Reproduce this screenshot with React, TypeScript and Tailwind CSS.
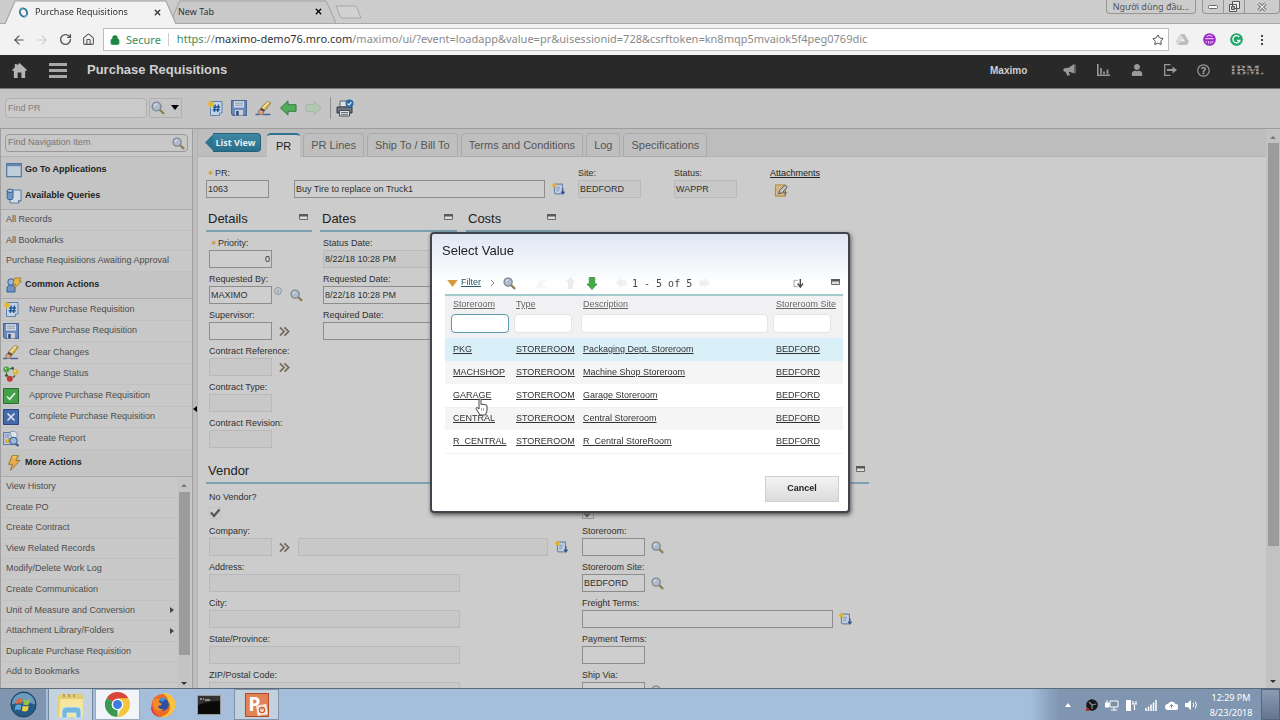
import React, { useState } from 'react';
import { FaUser, FaRegQuestionCircle } from 'react-icons/fa';
import { ArrowLeft, ArrowRight, RotateCw, Home, Star, Lock, X } from 'lucide-react';

/* ---------- icons ---------- */

type IconProps = { className?: string };

const SearchIcon = ({ className = 'size-[14px]' }: IconProps) => (
    <svg viewBox="0 0 16 16" className={className} aria-hidden="true">
        <path d="M10 10l4.200 4" stroke="#8a8150" strokeWidth="2.600" strokeLinecap="round" />
        <circle cx="6.300" cy="6.300" r="5" fill="#b0bccb" stroke="#7d8894" strokeWidth="1.600" />
        <path d="M3.800 6a2.800 2.800 0 0 1 3-2.600" stroke="#e4ebf3" strokeWidth="1.200" fill="none" />
    </svg>
);

const NewIcon = ({ className = 'size-4' }: IconProps) => (
    <svg viewBox="0 0 16 16" className={className} aria-hidden="true">
        <path d="M3.500 1.500h11.500v11.500l-2.500 2.500h-9z" fill="#c4d3e4" stroke="#5f82b0" />
        <path d="M12.500 15.500v-2.500h2.500" fill="#eef3f8" stroke="#5f82b0" />
        <path d="M8.200 4.500l-.8 7.500M11.500 4.500l-.8 7.500M6 7h7M5.700 9.800h7" stroke="#1c5590" strokeWidth="1.400" />
        <path d="M4 0l1 2.500L7.800 2 6.200 4.200 7.500 6.500 4.800 6 3.500 8.200 2.700 5.700 0 5l2-1.700L1.300.8l2 .7z" fill="#e4b62a" />
    </svg>
);

const SaveIcon = ({ className = 'size-4' }: IconProps) => (
    <svg viewBox="0 0 16 16" className={className} aria-hidden="true">
        <path d="M.6.6h14.800v14.800H2.200L.6 13.800z" fill="#6c8abb" stroke="#4f6998" strokeWidth="1.200" />
        <path d="M3 1.200h10v6.300H3z" fill="#d5dbe2" />
        <path d="M4 3.200h8M4 5.200h8" stroke="#8b99ad" />
        <path d="M4 10h8v5.400H4z" fill="#c9d0d9" />
        <path d="M5.200 11h2.500v4.400H5.200z" fill="#2f4775" />
    </svg>
);

const EraserIcon = ({ className = 'size-4' }: IconProps) => (
    <svg viewBox="0 0 16 16" className={className} aria-hidden="true">
        <path d="M0 14.500h4M7 14.500h8" stroke="#4b659b" strokeWidth="1.400" />
        <path d="M5.500 8L12 1.200 15.300 3.200 9.500 10.500z" fill="#d8b35a" stroke="#86702e" strokeWidth=".8" />
        <path d="M7.500 8L13 2" stroke="#faeaa6" strokeWidth="1.300" />
        <path d="M5.500 8l4 2.500-1 1.300-4.300-2.300z" fill="#39424e" />
        <path d="M4.200 9.500l4.300 2.300-2 2.500H4L2.500 12.200z" fill="#d5a586" stroke="#856346" strokeWidth=".8" />
    </svg>
);

const StatusIcon = ({ className = 'size-4' }: IconProps) => (
    <svg viewBox="0 0 16 16" className={className} aria-hidden="true">
        <path d="M6.500 3l3-.8M9 1l1.500 1.200L9.500 4M3.500 7v3M2 9l1.500 1.500L5 9M12 9.500l-2 2" stroke="#2e5c3a" strokeWidth="1.200" fill="none" />
        <circle cx="3.300" cy="3.500" r="3" fill="#4f9d4c" />
        <circle cx="12.700" cy="6" r="3" fill="#d9b544" />
        <circle cx="6.800" cy="12.800" r="3" fill="#c33a35" />
        <circle cx="2.700" cy="2.700" r=".9" fill="#b3dfae" />
        <circle cx="12" cy="5.200" r=".9" fill="#f6e8ae" />
    </svg>
);

const ApproveIcon = ({ className = 'size-4' }: IconProps) => (
    <svg viewBox="0 0 16 16" className={className} aria-hidden="true">
        <path d="M.5.5h15v15H.5z" fill="#43a047" stroke="#2c6b31" />
        <path d="M4 8.500l2.700 2.800L12 5" stroke="#e0efe0" strokeWidth="1.700" fill="none" />
    </svg>
);

const CompleteIcon = ({ className = 'size-4' }: IconProps) => (
    <svg viewBox="0 0 16 16" className={className} aria-hidden="true">
        <path d="M.5.5h15v15H.5z" fill="#4568a8" stroke="#2c4880" />
        <path d="M4.500 4.500l7 7M11.500 4.500l-7 7" stroke="#dde5f2" strokeWidth="1.700" />
    </svg>
);

const ReportIcon = ({ className = 'size-4' }: IconProps) => (
    <svg viewBox="0 0 16 16" className={className} aria-hidden="true">
        <path d="M.6 1.600h12v12H.6z" fill="#bdcbe0" stroke="#59749f" />
        <path d="M2 4h5M2 6h4" stroke="#728db8" />
        <path d="M2.500 12V8.500h2V12zM5 12V7h2v5z" fill="#d2a238" />
        <path d="M7 .5h5l2 2v5H9z" fill="#dce3ec" stroke="#8392ab" strokeWidth=".8" />
        <path d="M12 12l3.500 3" stroke="#3d598c" strokeWidth="2.200" />
        <circle cx="10.500" cy="9.800" r="3.500" fill="#9db9dc" stroke="#4e6c9f" strokeWidth="1.200" />
    </svg>
);

const BoltIcon = ({ className = 'size-4' }: IconProps) => (
    <svg viewBox="0 0 16 16" className={className} aria-hidden="true">
        <path d="M6 .7h6.500L10 5.500h4L4.500 15.300l2-6H2.500z" fill="#e6ae49" stroke="#94702f" strokeWidth=".9" />
        <path d="M6.800 2h3.500" stroke="#f7dc98" />
    </svg>
);

const CommonIcon = ({ className = 'size-4' }: IconProps) => (
    <svg viewBox="0 0 16 16" className={className} aria-hidden="true">
        <path d="M1 15v-4c0-2 2-3 4-3s4 1 4 3v4z" fill="#6e93c7" stroke="#3c5e93" />
        <circle cx="5" cy="5" r="3.200" fill="#9db7da" stroke="#3c5e93" />
        <path d="M8.500 1H15l-2 3h2.500L8 12l1.500-5H7z" fill="#e9bb44" stroke="#8f722b" strokeWidth=".8" />
    </svg>
);

const AppsIcon = ({ className = 'size-4' }: IconProps) => (
    <svg viewBox="0 0 16 16" className={className} aria-hidden="true">
        <path d="M.7 1.700h14.600v13H.7z" fill="#c0ceda" stroke="#53779f" strokeWidth="1.200" />
        <path d="M1 2h14v2.200H1z" fill="#6288b0" />
    </svg>
);

const QueryIcon = ({ className = 'size-4' }: IconProps) => (
    <svg viewBox="0 0 16 16" className={className} aria-hidden="true">
        <path d="M6 2h9v10.500L12.500 15H4v-3" fill="#d2dbe5" stroke="#5c7da4" />
        <path d="M12.500 15v-2.500H15" fill="none" stroke="#5c7da4" />
        <path d="M1.200 3v7.500c0 1.500 5.800 1.500 5.800 0V3" fill="#6f99c5" stroke="#35618f" />
        <ellipse cx="4.100" cy="2.800" rx="2.900" ry="1.700" fill="#a9c4de" stroke="#35618f" />
    </svg>
);

const ArrowIcon = ({ className = '', flip = false, fill = '#55ab5c', stroke = '#2f7a38' }) => (
    <svg viewBox="0 0 18 16" className={className} aria-hidden="true">
        <path
            d={flip ? 'M17.500 8L9.500 .5v4H1v7H9.500v4z' : 'M.5 8l8-7.500v4h8.500v7h-8.500v4z'}
            fill={fill}
            stroke={stroke}
            strokeLinejoin="round"
        />
    </svg>
);

const PrintIcon = ({ className = 'size-[18px]' }: IconProps) => (
    <svg viewBox="0 0 18 18" className={className} aria-hidden="true">
        <path d="M4 2h8v6H4z" fill="#dde1e6" stroke="#596069" />
        <path d="M1 8h15v6H1z" fill="#6c747e" stroke="#343b43" />
        <path d="M3.500 11.500h10V17h-10z" fill="#e2e5e9" stroke="#454c55" />
        <path d="M5 13.500h7M5 15.300h7" stroke="#6b737d" />
        <circle cx="13.500" cy="4.500" r="4" fill="#2b6aa6" />
        <path d="M11.500 4.500l1.500 1.500 2.500-3" stroke="#d0e0ef" strokeWidth="1.200" fill="none" />
    </svg>
);

const ListIcon = ({ className = 'size-[14px]' }: IconProps) => (
    <svg viewBox="0 0 16 16" className={className} aria-hidden="true">
        <path d="M4 2.500h9v8.500M4 4v8q0 1.500 1.500 1.500H12" fill="none" stroke="#6a84b0" strokeWidth="1.400" />
        <path d="M5 4h7v8.500H5z" fill="#c3d0e2" />
        <path d="M6 6h4M6 8h4M6 10h3" stroke="#7b93ba" />
        <path d="M13.500 7v6.500M11.500 11l2 2.700 2-2.700" stroke="#2f4f90" strokeWidth="1.400" fill="none" />
        <path d="M3.500 0l.9 2.200L7 2 5.500 4 6.600 6.200 4.200 5.500 2.500 7.500 2.200 5 0 4l2-1.200z" fill="#dfb32e" />
    </svg>
);

const Chevrons = () => (
    <svg viewBox="0 0 12 12" className="size-[11px]" aria-hidden="true">
        <path d="M1 1.500l4.500 4.500L1 10.500M6 1.500l4.500 4.500L6 10.500" fill="none" stroke="#75695a" strokeWidth="1.900" />
    </svg>
);

const CollapseIcon = () => (
    <svg viewBox="0 0 9 6" className="h-[6px] w-[9px]" aria-hidden="true">
        <path d="M.5.5h8v5h-8z" fill="#dcdcdc" stroke="#6a6a6a" />
        <path d="M0 0h9v2.500H0z" fill="#5a5a5a" />
    </svg>
);

const AttachIcon = () => (
    <svg viewBox="0 0 16 16" className="size-[15px]" aria-hidden="true">
        <path d="M1.500 2h10.500v12H1.500z" fill="#d4b585" stroke="#b3853a" />
        <path d="M5 11.500l1-3.500 5-5c1.500-1 3.500.5 2.500 2.200L8.500 10.500 5 11.500z" fill="#c8c8c8" stroke="#4b4b4b" />
        <path d="M9.500 10.500h4.500M12 8.500v5" stroke="#666" />
    </svg>
);

const Megaphone = () => (
    <svg viewBox="0 0 14 13" className="h-[12px] w-[13px]" aria-hidden="true">
        <path d="M12 0v10L6.500 8.300H6l1.500 3.500-2.800.8-2-4.300H1.500Q.3 7.800.3 6.300T1.500 4.500L6 4z" fill="currentColor" />
        <path d="M13 .5v9.500" stroke="currentColor" />
    </svg>
);

/* ---------- data ---------- */

const queries = ['All Records', 'All Bookmarks', 'Purchase Requisitions Awaiting Approval'];

const actions = [
    { label: 'New Purchase Requisition', Icon: NewIcon },
    { label: 'Save Purchase Requisition', Icon: SaveIcon },
    { label: 'Clear Changes', Icon: EraserIcon },
    { label: 'Change Status', Icon: StatusIcon },
    { label: 'Approve Purchase Requisition', Icon: ApproveIcon },
    { label: 'Complete Purchase Requisition', Icon: CompleteIcon },
    { label: 'Create Report', Icon: ReportIcon },
];

const moreActions = [
    { label: 'View History' },
    { label: 'Create PO' },
    { label: 'Create Contract' },
    { label: 'View Related Records' },
    { label: 'Modify/Delete Work Log' },
    { label: 'Create Communication' },
    { label: 'Unit of Measure and Conversion', sub: true },
    { label: 'Attachment Library/Folders', sub: true },
    { label: 'Duplicate Purchase Requisition' },
    { label: 'Add to Bookmarks' },
];

const storerooms = [
    ['PKG', 'STOREROOM', 'Packaging Dept. Storeroom', 'BEDFORD'],
    ['MACHSHOP', 'STOREROOM', 'Machine Shop Storeroom', 'BEDFORD'],
    ['GARAGE', 'STOREROOM', 'Garage Storeroom', 'BEDFORD'],
    ['CENTRAL', 'STOREROOM', 'Central Storeroom', 'BEDFORD'],
    ['R_CENTRAL', 'STOREROOM', 'R_Central StoreRoom', 'BEDFORD'],
];

const tabs = ['PR', 'PR Lines', 'Ship To / Bill To', 'Terms and Conditions', 'Log', 'Specifications'];

/* ---------- browser ---------- */

function TabShape({ fill }: { fill: string }) {
    return (
        <svg viewBox="0 0 170 24" preserveAspectRatio="none" className="absolute inset-0 size-full" aria-hidden="true">
            <path d="M0 24L10 1h150l10 23" fill={fill} stroke="#a0a0a0" />
        </svg>
    );
}

function Browser() {
    return (
        <header className="shrink-0 font-['Noto_Sans','Open_Sans',sans-serif]">
            <div className="flex h-6 items-stretch border-b border-[#a8a8a8] bg-[#cccccc] pl-[5px] text-[9px] text-[#333]">
                <div className="relative z-10 -mb-px flex w-[171px] items-center pr-[14px] pl-[13px]">
                    <TabShape fill="#f2f2f2" />
                    <svg viewBox="0 0 12 12" className="relative mr-[6px] size-[11px]" aria-hidden="true">
                        <ellipse cx="6" cy="6" rx="3.800" ry="4.500" fill="none" stroke="#2c7295" strokeWidth="2" transform="rotate(-25 6 6)" />
                        <path d="M2 2l3-1M7 11l3-2" stroke="#6cb5cf" strokeWidth="1.500" />
                    </svg>
                    <span className="relative flex-1 whitespace-nowrap">Purchase Requisitions</span>
                    <button aria-label="Close Purchase Requisitions" className="relative"><X size={9} strokeWidth={3.5} /></button>
                </div>
                <div className="relative -ml-[6px] flex w-[166px] items-center pr-[13px] pl-[8px]">
                    <TabShape fill="#c9c9c9" />
                    <span className="relative flex-1">New Tab</span>
                    <button aria-label="Close New Tab" className="relative text-black"><X size={9} strokeWidth={3.5} /></button>
                </div>
                <button aria-label="New tab" className="-ml-px self-center">
                    <svg viewBox="0 0 27 14" className="h-[14px] w-[27px]"><path d="M1 1h19q1 0 2 2l4 10H7q-1 0-2-2z" fill="#d2d2d2" stroke="#a6a6a6" /></svg>
                </button>
                <div className="ml-auto flex items-start gap-[6px] text-[#555]">
                    <button className="h-[14px] w-[90px] rounded-b border border-t-0 border-[#959595] px-1 text-[9px] leading-[13px]">Người dùng đầu...</button>
                    <div className="flex h-[14px] w-[78px] rounded-b border border-t-0 border-[#959595]">
                        <button aria-label="Minimize" className="flex w-[21px] items-center justify-center border-r border-[#959595]">
                            <svg viewBox="0 0 10 4" className="h-1 w-[10px]"><rect x=".5" y=".5" width="9" height="3" rx="1" fill="#fff" stroke="#666" /></svg>
                        </button>
                        <button aria-label="Restore" className="flex w-[21px] items-center justify-center border-r border-[#959595]">
                            <svg viewBox="0 0 11 11" className="size-[11px]"><path d="M3.500.5h7v7h-7zM.5 3.500h7v7h-7z" fill="#eee" stroke="#555" /><path d="M2.500 5.500h3v3h-3z" fill="#aaa" stroke="#555" /></svg>
                        </button>
                        <button aria-label="Close window" className="flex flex-1 items-center justify-center">
                            <svg viewBox="0 0 10 10" className="size-[10px]"><path d="M1.500 1.500l7 7M8.500 1.500l-7 7" stroke="#555" strokeWidth="3" /><path d="M1.500 1.500l7 7M8.500 1.500l-7 7" stroke="#eee" strokeWidth="1.400" /></svg>
                        </button>
                    </div>
                </div>
            </div>
            <div className="flex h-[31px] items-center bg-[#f2f2f2] pl-3 text-[#555]">
                <button aria-label="Back"><ArrowLeft size={14} /></button>
                <button aria-label="Forward" className="ml-[9px] text-[#ccc]"><ArrowRight size={14} /></button>
                <button aria-label="Reload" className="ml-[10px]"><RotateCw size={13} strokeWidth={2.5} /></button>
                <button aria-label="Home page" className="ml-[10px]"><Home size={13} /></button>
                <div className="ml-[8px] flex h-[23px] flex-1 items-center border border-[#bcbcbc] bg-white pr-1 pl-[6px] text-[11px] text-[#8a8a8a]">
                    <Lock size={10} strokeWidth={3} className="fill-[#1d8641] text-[#1d8641]" />
                    <span className="ml-[6px] border-r border-[#ccc] pr-[7px] leading-[13px] text-[#3c8d58]">Secure</span>
                    <div role="textbox" aria-label="Address" contentEditable suppressContentEditableWarning className="ml-2 flex-1 whitespace-nowrap outline-none">
                        <span className="text-[#3c8d58]">https</span>://<span className="text-[#333]">maximo-demo76.mro.com</span>/maximo/ui/?event=loadapp&amp;value=pr&amp;uisessionid=728&amp;csrftoken=kn8mqp5mvaiok5f4peg0769dic
                    </div>
                    <button aria-label="Bookmark" className="text-[#444]"><Star size={12} /></button>
                </div>
                <div className="ml-[7px] flex w-[104px] items-center">
                    <svg viewBox="0 0 14 14" className="size-[13px]" aria-hidden="true">
                        <path d="M5 1h4l5 8-2 4H2L0 9z" fill="#bdbdbd" /><path d="M7 5l2.500 4h-5z" fill="#f2f2f2" /><path d="M5 1l2.500 4L2.300 13 0 9z" fill="#dadada" />
                    </svg>
                    <svg viewBox="0 0 14 14" className="ml-[14px] size-[13px]" aria-hidden="true">
                        <circle cx="7" cy="7" r="6.800" fill="#9a2bc8" /><path d="M2.500 6h9M4 4q3-3 6 0M3.500 8.500v2M6 8.500v3M8.500 8.500v3M10.500 8.500v2" stroke="#ebbdf8" strokeWidth="1.200" fill="none" />
                    </svg>
                    <svg viewBox="0 0 14 14" className="ml-[14px] size-[13px]" aria-hidden="true">
                        <circle cx="7" cy="7" r="6.800" fill="#22a56b" /><path d="M10 4.500A3.800 3.800 0 1 0 10.500 8H7.500M10.500 8v2" stroke="#fff" strokeWidth="1.400" fill="none" />
                    </svg>
                    <button aria-label="Browser menu" className="ml-[17px]">
                        <svg viewBox="0 0 4 12" className="h-3 w-1"><path d="M1 1h2v2H1zM1 5h2v2H1zM1 9h2v2H1z" fill="#444" /></svg>
                    </button>
                </div>
            </div>
        </header>
    );
}

/* ---------- application bars ---------- */

function AppHeader() {
    return (
        <div className="flex h-[34px] shrink-0 items-center border-b border-[#777] bg-[#292929] pr-4 pb-[3px] pl-3 text-[#999]">
            <button aria-label="Home" className="text-[#b5b5b5]">
                <svg viewBox="0 0 16 16" className="size-[15px]"><path d="M8 0l8 7.500-1.200 1.300L14 8v8H10v-6H6v6H2V8l-.8.8L0 7.500l3-2.800V1h2.200v1.600z" fill="currentColor" /></svg>
            </button>
            <button aria-label="Menu" className="ml-[22px] flex w-[18px] flex-col gap-[3px]">
                <i className="h-[3px] bg-[#a8a8a8]" />
                <i className="h-[3px] bg-[#a8a8a8]" />
                <i className="h-[3px] bg-[#a8a8a8]" />
            </button>
            <h1 className="ml-[20px] flex-1 text-[13px] font-bold text-[#cfcfcf]">Purchase Requisitions</h1>
            <span className="mr-[36px] text-[10px] font-bold text-[#cfcfcf]">Maximo</span>
            <button aria-label="Bulletins"><Megaphone /></button>
            <button aria-label="Reports" className="ml-[21px]">
                <svg viewBox="0 0 13 12" className="h-3 w-[13px]"><path d="M.7 0v11.300H13M4 10V4M7 10V7.500M10.500 10V5.500" stroke="currentColor" strokeWidth="1.700" fill="none" /></svg>
            </button>
            <button aria-label="Profile" className="ml-[21px]"><FaUser className="text-[12px]" /></button>
            <button aria-label="Sign out" className="ml-[21px]">
                <svg viewBox="0 0 13 12" className="h-3 w-[13px]"><path d="M6.500.7H.7v10.600h5.800" stroke="currentColor" strokeWidth="1.300" fill="none" /><path d="M3 5h5.500V2.500L13 6 8.500 9.500V7H3z" fill="currentColor" /></svg>
            </button>
            <button aria-label="Help" className="ml-[20px]"><FaRegQuestionCircle className="text-[13px]" /></button>
            <span className="relative ml-[20px] font-['Liberation_Serif',serif] text-[15px] leading-[14px] font-bold text-[#999]">
                IBM.
                <i className="absolute inset-0 bg-[repeating-linear-gradient(to_bottom,#29292900_0_2px,#292929b0_2px_3px)]" />
            </span>
        </div>
    );
}

function ToolBar() {
    return (
        <div className="flex h-[40px] shrink-0 items-center border-b border-[#9c9c9c] bg-[#c5c5c5] pb-[2px] pl-[5px] text-[9px]">
            <input aria-label="Find PR" placeholder="Find PR" className="h-5 w-[142px] rounded border border-[#b0b0b0] bg-[#cacaca] px-[2px] placeholder:text-[#808080]" />
            <div className="ml-[2px] flex h-5 w-[33px] items-center justify-between border border-[#b0b0b0] pr-[2px] pl-px">
                <button aria-label="Find"><SearchIcon /></button>
                <button aria-label="Search options"><svg viewBox="0 0 8 5" className="h-[5px] w-2"><path d="M0 0h8L4 5z" /></svg></button>
            </div>
            <div className="ml-[25px] flex items-center gap-2">
                <button aria-label="New"><NewIcon /></button>
                <button aria-label="Save"><SaveIcon /></button>
                <button aria-label="Clear"><EraserIcon className="h-4 w-[17px]" /></button>
                <button aria-label="Previous"><ArrowIcon className="h-4 w-[17px]" /></button>
                <button aria-label="Next"><ArrowIcon className="h-4 w-[17px]" flip fill="#b3c8b3" stroke="#a3b7a3" /></button>
                <i className="h-[22px] w-px bg-[#8f8f8f]" />
                <button aria-label="Print" className="-ml-[3px]"><PrintIcon /></button>
            </div>
        </div>
    );
}

/* ---------- sidebar ---------- */

function NavHeading({ Icon, label }: { Icon: (p: IconProps) => React.JSX.Element; label: string }) {
    return (
        <h2 className="flex h-[26px] shrink-0 items-center gap-[3px] pl-[5px] font-bold text-[#222]">
            <Icon />
            {label}
        </h2>
    );
}

function Sidebar() {
    return (
        <nav className="flex w-[193px] shrink-0 flex-col border-x border-[#a0a0a0] bg-[#c8c8c8] text-[9px] text-[#4d4d4d]">
            <div className="flex h-[28px] shrink-0 items-center border-b border-[#b0b0b0] px-1 pt-px">
                <div className="flex h-[18px] flex-1 items-center rounded border border-[#999] pr-[2px] pl-[2px]">
                    <input aria-label="Find Navigation Item" placeholder="Find Navigation Item" className="min-w-0 flex-1 bg-transparent placeholder:text-[#777]" />
                    <SearchIcon className="size-[13px]" />
                </div>
            </div>
            <div className="shrink-0 border-b border-[#ababab] bg-[#c4c4c4]">
                <NavHeading Icon={AppsIcon} label="Go To Applications" />
                <NavHeading Icon={QueryIcon} label="Available Queries" />
            </div>
            <ul className="flex h-[62px] shrink-0 flex-col">
                {queries.map(q => (
                    <li key={q} className="flex flex-1 items-center border-b border-[#c1c1c1] pl-[5px]"><a href="#">{q}</a></li>
                ))}
            </ul>
            <div className="shrink-0 border-b border-[#ababab] bg-[#c4c4c4]">
                <NavHeading Icon={CommonIcon} label="Common Actions" />
            </div>
            <ul className="flex h-[151px] shrink-0 flex-col">
                {actions.map(({ label, Icon }) => (
                    <li key={label} className="flex flex-1 items-center gap-[10px] border-b border-[#c1c1c1] pl-[2px]">
                        <Icon />
                        <a href="#">{label}</a>
                    </li>
                ))}
            </ul>
            <div className="shrink-0 border-b border-[#ababab] bg-[#c4c4c4]">
                <NavHeading Icon={BoltIcon} label="More Actions" />
            </div>
            <div className="flex min-h-0 flex-1">
                <ul className="flex flex-1 flex-col pb-[5px]">
                    {moreActions.map(m => (
                        <li key={m.label} className="flex flex-1 items-center justify-between border-b border-[#c1c1c1] pr-1 pl-[5px]">
                            <a href="#">{m.label}</a>
                            {m.sub && <svg viewBox="0 0 4 6" className="h-[6px] w-1"><path d="M0 0l4 3-4 3z" fill="#444" /></svg>}
                        </li>
                    ))}
                </ul>
                <div className="mr-[2px] flex w-[12px] flex-col items-center bg-[#c4c4c4] pt-[7px] pb-[3px]">
                    <svg viewBox="0 0 6 3" className="h-[3px] w-[6px]"><path d="M0 3l3-3 3 3z" fill="#777" /></svg>
                    <i className="mt-[5px] h-[163px] w-[11px] bg-[#9b9b9b]" />
                    <svg viewBox="0 0 6 3" className="mt-auto h-[3px] w-[6px]"><path d="M0 0l3 3 3-3z" fill="#333" /></svg>
                </div>
            </div>
        </nav>
    );
}

/* ---------- record form ---------- */

interface FieldProps {
    label: string;
    value?: string;
    width?: string;
    readOnly?: boolean;
    required?: boolean;
    right?: boolean;
    children?: React.ReactNode;
}

function Field({ label, value = '', width = 'w-[63px]', readOnly, required, right, children }: FieldProps) {
    const id = 'f-' + label.toLowerCase().replace(/\W+/g, '-');
    return (
        <div className="flex flex-col">
            <label htmlFor={id} className="flex h-[13px] items-end pb-px leading-[11px] whitespace-nowrap">
                {required && <span aria-hidden="true" className="w-[9px] pl-px text-[#d29a2c]">✶</span>}
                {label}
            </label>
            <div className="flex h-[18px] items-center">
                <input
                    id={id}
                    defaultValue={value}
                    readOnly={readOnly}
                    className={`h-[18px] shrink-0 border px-px ${width} ${readOnly ? 'border-[#b9b9b9] bg-[#c8c8c8]' : 'border-[#8d8d8d] bg-[#cecece]'} ${right ? 'text-right' : ''}`}
                />
                {children}
            </div>
        </div>
    );
}

function Section({ title, className, children }: { title: string; className: string; children?: React.ReactNode }) {
    return (
        <section className={`flex shrink-0 flex-col ${className}`}>
            <div className="flex h-[25px] items-center justify-between border-b-2 border-[#7ba0b0] pr-1 pl-[2px]">
                <h2 className="text-[13px] text-[#222]">{title}</h2>
                <button aria-label={`Collapse ${title}`} className="pb-1"><CollapseIcon /></button>
            </div>
            <div className="flex flex-col gap-[5px] pt-[5px] pl-[3px]">{children}</div>
        </section>
    );
}

function CheckField({ id, label, frame }: { id: string; label: string; frame: string }) {
    return (
        <div className="flex h-[34px] flex-col gap-1 pt-[2px]">
            <label htmlFor={id} className="h-3 leading-3">{label}</label>
            <span className="relative size-3">
                <input id={id} type="checkbox" defaultChecked className={`block size-3 appearance-none border ${frame}`} />
                <svg viewBox="0 0 12 12" className="pointer-events-none absolute inset-0 size-3" aria-hidden="true">
                    <path d="M2 5.500L5 9l5.500-6.500" fill="none" stroke="#555" strokeWidth="2.200" />
                </svg>
            </span>
        </div>
    );
}

function RecordForm() {
    const [tab, setTab] = useState('PR');
    return (
        <main className="flex min-w-0 flex-1 text-[9px] text-[#303030]">
            <div className="flex min-w-0 flex-1 flex-col">
                <div className="flex h-7 shrink-0 items-end border-b border-[#b4b4b4] bg-[#bdbdbd] pl-[7px]">
                    <button className="mr-[6px] mb-[4px] flex h-[19px] items-center text-[#e8eef2]">
                        <svg viewBox="0 0 9 18" className="h-[17px] w-[8px]"><path d="M9 0v18L0 9z" fill="#2c738f" /></svg>
                        <span className="flex h-[19px] w-[48px] items-center justify-center rounded-r-sm border border-l-0 border-[#23627c] bg-linear-to-b from-[#3f87a2] to-[#27708c] pr-[2px] font-['Open_Sans',sans-serif] text-[9px] font-bold whitespace-nowrap">List View</span>
                    </button>
                    <div role="tablist" className="-mb-px flex items-end gap-[3px] text-[11px] text-[#555]">
                        {tabs.map(t => (
                            <button
                                key={t}
                                role="tab"
                                aria-selected={t === tab}
                                onClick={() => setTab(t)}
                                className={`h-6 rounded-t-sm whitespace-nowrap ${t === tab ? 'border-t-2 border-[#2c738f] bg-[#cdcdcd] px-[9px] text-[#222]' : 'border border-[#aaa] bg-[#bfbfbf] px-[7px]'}`}
                            >
                                {t}
                            </button>
                        ))}
                    </div>
                </div>
                <div className="min-h-0 flex-1 overflow-hidden bg-[#cccccc] pt-[10px] pl-[8px]">
                    <div className="flex items-start">
                        <Field label="PR:" value="1063" required />
                        <div className="mt-[13px] ml-[25px] flex items-center gap-[6px]">
                            <input aria-label="PR description" defaultValue="Buy Tire to replace on Truck1" className="h-[18px] w-[251px] border border-[#8d8d8d] bg-[#cecece] px-px" />
                            <ListIcon />
                        </div>
                        <div className="ml-[13px]"><Field label="Site:" value="BEDFORD" readOnly /></div>
                        <div className="ml-[33px]"><Field label="Status:" value="WAPPR" readOnly /></div>
                        <a href="#" className="ml-[33px] flex flex-col gap-[2px] text-[#222] underline">
                            Attachments
                            <span className="pl-1"><AttachIcon /></span>
                        </a>
                    </div>
                    <div className="mt-[9px] flex items-start">
                        <Section title="Details" className="w-[106px]">
                            <Field label="Priority:" value="0" required right />
                            <Field label="Requested By:" value="MAXIMO">
                                <span className="mb-2 ml-[2px] flex size-2 items-center justify-center rounded-full border border-[#8794a4] text-[6px] leading-none text-[#456]">i</span>
                                <SearchIcon className="ml-[8px] size-[13px] shrink-0" />
                            </Field>
                            <Field label="Supervisor:"><span className="ml-[7px]"><Chevrons /></span></Field>
                            <Field label="Contract Reference:" readOnly><span className="ml-[7px]"><Chevrons /></span></Field>
                            <Field label="Contract Type:" readOnly />
                            <Field label="Contract Revision:" readOnly />
                        </Section>
                        <Section title="Dates" className="ml-[8px] w-[137px]">
                            <Field label="Status Date:" value="8/22/18 10:28 PM" width="w-[110px]" readOnly />
                            <Field label="Requested Date:" value="8/22/18 10:28 PM" width="w-[110px]" />
                            <Field label="Required Date:" width="w-[110px]" />
                        </Section>
                        <Section title="Costs" className="ml-[9px] w-[94px]" />
                    </div>
                    <div className="mt-[11px] flex items-start">
                        <Section title="Vendor" className="w-[364px]">
                            <CheckField id="no-vendor" label="No Vendor?" frame="border-[#c2c2c2]" />
                            <div className="-mt-[3px]">
                                <Field label="Company:" readOnly>
                                    <span className="ml-[7px]"><Chevrons /></span>
                                    <input aria-label="Company name" readOnly className="ml-2 h-[18px] w-[250px] shrink-0 border border-[#b9b9b9] bg-[#c8c8c8]" />
                                    <ListIcon className="ml-[6px] size-[14px] shrink-0" />
                                </Field>
                            </div>
                            <Field label="Address:" width="w-[251px]" readOnly />
                            <Field label="City:" width="w-[251px]" readOnly />
                            <Field label="State/Province:" width="w-[251px]" readOnly />
                            <Field label="ZIP/Postal Code:" width="w-[251px]" readOnly />
                        </Section>
                        <Section title="Shipping" className="ml-[9px] w-[290px]">
                            <CheckField id="inspection" label="Inspection?" frame="border-[#999]" />
                            <div className="-mt-[3px]">
                                <Field label="Storeroom:"><SearchIcon className="ml-[6px] size-[13px]" /></Field>
                            </div>
                            <Field label="Storeroom Site:" value="BEDFORD"><SearchIcon className="ml-[6px] size-[13px]" /></Field>
                            <Field label="Freight Terms:" width="w-[251px]"><ListIcon className="ml-[5px] size-[14px]" /></Field>
                            <Field label="Payment Terms:" />
                            <Field label="Ship Via:"><SearchIcon className="ml-[6px] size-[13px]" /></Field>
                        </Section>
                    </div>
                </div>
            </div>
            <div className="flex w-[14px] shrink-0 flex-col items-center bg-[#c2c2c2] pt-[7px] pb-[5px]">
                <svg viewBox="0 0 6 3" className="h-[3px] w-[6px]"><path d="M0 3l3-3 3 3z" fill="#777" /></svg>
                <i className="mt-1 w-[11px] flex-[3] bg-[#9b9b9b]" />
                <i className="flex-1" />
                <svg viewBox="0 0 6 3" className="h-[3px] w-[6px]"><path d="M0 0l3 3 3-3z" fill="#333" /></svg>
            </div>
        </main>
    );
}

/* ---------- lookup dialog ---------- */

const headClass = ['pl-2', 'pl-[5px]', 'pl-[5px]', 'pl-[6px]'];
const filterClass = ['w-[58px] border-[#5b9aae]', 'w-[58px] border-[#e4e4e4]', 'w-[187px] border-[#e4e4e4]', 'w-[58px] border-[#e4e4e4]'];
const columns = ['Storeroom', 'Type', 'Description', 'Storeroom Site'];

function SelectValueDialog() {
    return (
        <div className="fixed inset-0 flex items-start justify-center pt-[232px]">
            <div role="dialog" aria-label="Select Value" className="relative flex w-[420px] flex-col rounded border-2 border-[#40444d] bg-white bg-linear-to-b from-[#dfe6f4] to-white to-[50px] px-[5px] pb-[9px] text-[9px] text-[#333] shadow-[1px_2px_4px_#555]">
                <h2 className="pt-[7px] pl-[5px] text-[13px] leading-5 text-[#222]">Select Value</h2>
                <div className="ml-2 flex h-[35px] items-center border-b-2 border-[#a3cbcd] pt-[11px]">
                    <svg viewBox="0 0 12 8" className="ml-[2px] h-[7px] w-[11px]"><path d="M0 0h12L6 8z" fill="#d79b3e" /></svg>
                    <a href="#" className="ml-[3px] text-[#24596e] underline">Filter</a>
                    <svg viewBox="0 0 5 8" className="ml-[9px] h-2 w-[5px]"><path d="M1 1l3 3-3 3" fill="none" stroke="#888" /></svg>
                    <button aria-label="Search" className="ml-[8px]"><SearchIcon className="size-[13px]" /></button>
                    <EraserIcon className="ml-[20px] size-[10px] opacity-10" />
                    <svg viewBox="0 0 12 14" className="ml-[19px] h-3 w-[11px]"><path d="M6 0l6 6H9v8H3V6H0z" fill="#ececec" /></svg>
                    <button aria-label="Next row" className="ml-[10px]"><svg viewBox="0 0 12 14" className="h-[13px] w-3"><path d="M6 13.500L.5 7.500H3V.5h6v7h2.500z" fill="#42ad45" stroke="#2c7d31" strokeWidth=".7" /></svg></button>
                    <ArrowIcon className="ml-[18px] h-[10px] w-[11px]" fill="#f0f0f0" stroke="#f0f0f0" />
                    <span className="ml-[5px] font-['DejaVu_Sans_Mono',monospace] text-[10px] whitespace-nowrap text-[#444]">1 - 5 of 5</span>
                    <ArrowIcon className="ml-[7px] h-[10px] w-[11px]" flip fill="#f0f0f0" stroke="#f0f0f0" />
                    <button aria-label="Download" className="ml-auto"><svg viewBox="0 0 12 10" className="h-[9px] w-[11px]"><path d="M5 1.500H1v7h4" fill="none" stroke="#999" /><path d="M8 0v8M5 5l3 4 3-4" fill="none" stroke="#444" strokeWidth="1.500" /></svg></button>
                    <button aria-label="Collapse table" className="mr-[3px] ml-[27px] pb-[3px]"><CollapseIcon /></button>
                </div>
                <table className="ml-2 table-fixed border-collapse text-left">
                    <colgroup>
                        <col className="w-[66px]" />
                        <col className="w-[67px]" />
                        <col className="w-[192px]" />
                        <col />
                    </colgroup>
                    <thead className="bg-[#f1f1f3]">
                        <tr className="h-[17px]">
                            {columns.map((c, i) => (
                                <th key={c} className={`p-0 font-normal whitespace-nowrap text-[#666] ${headClass[i]}`}><a href="#" className="underline">{c}</a></th>
                            ))}
                        </tr>
                        <tr className="h-[25px]">
                            {columns.map((c, i) => (
                                <td key={c} className={`p-0 align-top ${i === 0 ? 'pl-[6px]' : 'pl-[3px]'}`}>
                                    <input aria-label={`Filter ${c}`} className={`mt-px block h-[19px] rounded-sm border bg-white px-1 outline-none ${filterClass[i]}`} />
                                </td>
                            ))}
                        </tr>
                    </thead>
                    <tbody>
                        {storerooms.map((row, r) => (
                            <tr key={row[0]} className={`h-[23px] ${r === 0 ? 'bg-[#d9f0f9]' : r % 2 ? 'bg-[#f5f5f6]' : 'border-b border-[#f1f1f1] bg-white'}`}>
                                {row.map((cell, i) => (
                                    <td key={i} className={`p-0 whitespace-nowrap ${headClass[i]}`}><a href="#" className="underline">{cell}</a></td>
                                ))}
                            </tr>
                        ))}
                    </tbody>
                </table>
                <button className="mt-[22px] mr-1 h-[26px] w-[74px] self-end border border-[#d0d0d0] bg-linear-to-b from-[#f3f3f3] to-[#dcdcdc] font-bold text-[#222]">Cancel</button>
                <svg viewBox="0 0 14 18" className="pointer-events-none absolute top-[164px] left-[43px] h-[18px] w-[14px]" aria-hidden="true">
                    <path d="M4 1.500q1.500-1.500 2 0v5q1-.8 2 0 1-.6 2 .4 1.800-.5 2 1v4.600L10.500 17H5L1 10.500q.5-1.500 1.800-.7L4 11z" fill="#fff" stroke="#444" />
                    <path d="M6.500 10v3M8.500 10v3" stroke="#999" strokeWidth=".8" />
                </svg>
            </div>
        </div>
    );
}

/* ---------- taskbar ---------- */

function Taskbar() {
    return (
        <footer className="relative z-10 flex h-8 shrink-0 items-stretch border-t border-[#5b6b7c] bg-[#a4bedb] font-['Noto_Sans','Open_Sans',sans-serif]">
            <button aria-label="Start" className="flex w-[46px] items-center justify-center bg-[#8095b0]">
                <svg viewBox="0 0 28 28" className="size-[27px]">
                    <circle cx="14" cy="14" r="13" fill="#235a86" stroke="#1c3b57" />
                    <path d="M2 14a12 12 0 0 1 24 0q-12-5-24 0z" fill="#6a9bbd" />
                    <path d="M7 9q3-2.500 6-.8l-1 5.300q-3-1.500-6 .3z" fill="#e2673b" />
                    <path d="M14.500 8.700q3 1.500 6.300-.4l-1 5.400q-3 1.800-6.300.3z" fill="#93c04a" />
                    <path d="M5.800 15q3-1.800 6-.3l-1 5.200q-3-1.500-6 .2z" fill="#5fa8dc" />
                    <path d="M13.200 15.200q3.300 1.500 6.300-.2l-1 5.300q-3 1.700-6.300.2z" fill="#f4cb45" />
                </svg>
            </button>
            <button aria-label="Explorer" className="ml-[2px] flex w-[45px] items-center justify-center border-x border-[#73879e] bg-[#c5d2e0]">
                <svg viewBox="0 0 28 28" className="size-[28px]">
                    <path d="M1 5l5-3 3 2 4-2 3 2 7-2 3 3v21H1z" fill="#e3cc73" />
                    <path d="M3 8h23v18H2z" fill="#f5e59d" /><path d="M7 3v3M12 3v3M17 3v3" stroke="#8b7840" />
                    <path d="M5 27v-7q0-4 4-4h11q4 0 4 4v7h-5v-5H10v5z" fill="#72b8dc" stroke="#d6eef9" strokeWidth=".8" />
                </svg>
            </button>
            <button aria-label="Chrome" className="ml-[2px] flex w-[45px] items-center justify-center border border-[#9aabbd] bg-[#f1f5f9]">
                <svg viewBox="0 0 24 24" className="size-[25px]">
                    <path d="M12 12L1.600 6A12 12 0 0 1 22.400 6z" fill="#d8453a" />
                    <path d="M12 12L1.600 6A12 12 0 0 0 12 24z" fill="#36994f" />
                    <path d="M12 12h5.200L12 24A12 12 0 0 0 22.400 6H12z" fill="#f3c63c" />
                    <circle cx="12" cy="12" r="5.600" fill="#fff" /><circle cx="12" cy="12" r="4.300" fill="#3d7ddd" />
                </svg>
            </button>
            <button aria-label="Firefox" className="ml-[10px]">
                <svg viewBox="0 0 26 26" className="size-[26px]">
                    <circle cx="13" cy="13.500" r="11.500" fill="#ee6a25" />
                    <path d="M12 1q9-1 13 8 2 8-5 14-4 3-9 2 9-3 9-10 0-4-2-6 0-5-6-8z" fill="#f9c43c" />
                    <circle cx="12.500" cy="12.500" r="6.300" fill="#2a50a0" />
                    <path d="M9 7.500q4-4 8 0-4 0-4 3z" fill="#3e91d4" />
                    <path d="M3 5q0 2 1 3 3-2 6-1-1 2-1 3l3 2q-1 2-4 2 1 4 6 3-4 4-9 0-3-3-2-12z" fill="#f58a2c" />
                    <path d="M2 12q0 10 9 13-8 0-10-8z" fill="#dc3c48" />
                </svg>
            </button>
            <button aria-label="Command Prompt" className="ml-[21px]">
                <svg viewBox="0 0 24 20" className="h-5 w-6"><path d="M.5.5h23v19H.5z" fill="#0a0a0a" stroke="#999" /><path d="M1 1h22v5Q10 6 1 10z" fill="#333" /><path d="M3 4h2M6 4h1M8 5h5" stroke="#eee" /></svg>
            </button>
            <button aria-label="PowerPoint" className="ml-[13px] flex w-[45px] items-center justify-center border border-[#7f93aa] bg-[#c3d1df]">
                <span className="relative flex size-6 items-center border border-[#b24c24] bg-[#e08458] pl-[3px] text-[19px] leading-none font-bold text-white">
                    P
                    <svg viewBox="0 0 14 14" className="absolute right-0 bottom-0 size-[12px]"><path d="M0 2l12-2 2 12-12 2z" fill="#f6e9e1" /><circle cx="7" cy="7" r="3" fill="none" stroke="#cb5f34" strokeWidth="1.500" /><path d="M7 7V3" stroke="#cb5f34" /></svg>
                </span>
            </button>
            <div className="ml-auto flex w-[250px] items-center bg-linear-to-r from-[#a4bedb] to-[#8095b0] to-[30px] text-white">
                <svg viewBox="0 0 6 4" className="ml-[35px] h-1 w-[6px]"><path d="M0 4l3-4 3 4z" fill="#fff" /></svg>
                <svg viewBox="0 0 12 12" className="ml-[15px] size-3"><circle cx="6" cy="6" r="5.800" fill="#16181c" /><path d="M6 6L3 3M6 6l4-1M6 6v4" stroke="#8b8f98" strokeWidth="1.200" /><path d="M0 9h3v3H0z" fill="#a5322e" /></svg>
                <svg viewBox="0 0 14 12" className="ml-[7px] h-3 w-[14px]"><path d="M5 2h8v6H5z" fill="#7d8fa6" stroke="#fff" /><path d="M9 8v3M6 11h6M2 1v3M0 4h4v4H0z" fill="#fff" stroke="#fff" /></svg>
                <svg viewBox="0 0 12 12" className="ml-[6px] size-3"><path d="M1 1h5v11H1z" fill="#fff" /><path d="M7 5h5M8 2v3M11 2v3M9.500 6v5" stroke="#fff" strokeWidth="1.200" /></svg>
                <svg viewBox="0 0 12 12" className="ml-[8px] size-3"><path d="M1 12V9M3.500 12V7.500M6 12V5.500M8.500 12V3.500M11 12V1" stroke="#fff" strokeWidth="1.500" /></svg>
                <svg viewBox="0 0 13 10" className="ml-[8px] h-[10px] w-[13px]"><path d="M3 10a3 3 0 0 1 0-6 4 4 0 0 1 7.500 0 3 3 0 0 1 0 6z" fill="#fff" /><path d="M6.500 4.500v4M4.500 6.500l2-2 2 2" stroke="#8095b0" fill="none" /></svg>
                <svg viewBox="0 0 13 12" className="ml-[7px] h-3 w-[13px]"><path d="M0 4h2.500L6 1v10L2.500 8H0z" fill="#fff" /><path d="M8 4q1.500 2 0 4M10 2.500q3 3.500 0 7" stroke="#fff" fill="none" /></svg>
                <div className="ml-[8px] flex w-[50px] flex-col items-center text-[9px] leading-[15px] whitespace-nowrap">
                    <span>12:29 PM</span>
                    <span>8/23/2018</span>
                </div>
                <button aria-label="Show desktop" className="ml-auto h-full w-[19px] border border-[#54677e] bg-linear-to-b from-[#8a9cb3] to-[#63768e]" />
            </div>
        </footer>
    );
}

export default function App() {
    return (
        <div className="flex h-screen flex-col overflow-hidden bg-[#cccccc] font-['Liberation_Sans',Arial,sans-serif]">
            <Browser />
            <AppHeader />
            <ToolBar />
            <div className="flex min-h-0 flex-1">
                <Sidebar />
                <div className="flex w-[5px] shrink-0 items-center border-r border-[#b3b3b3] bg-[#bdbdbd]">
                    <svg viewBox="0 0 4 6" className="h-[6px] w-1"><path d="M4 0v6L0 3z" /></svg>
                </div>
                <RecordForm />
            </div>
            <Taskbar />
            <SelectValueDialog />
        </div>
    );
}
